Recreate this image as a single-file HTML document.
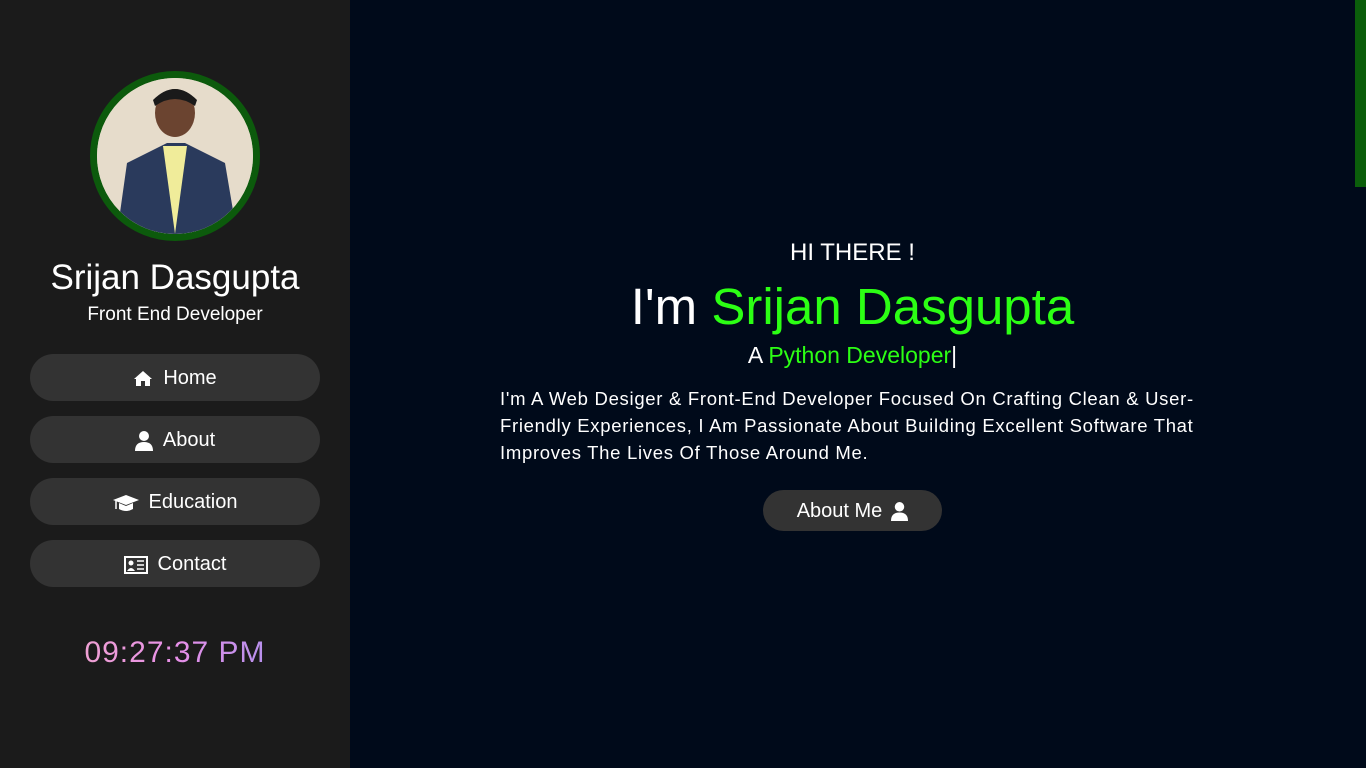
<!DOCTYPE html>
<html><head><meta charset="utf-8"><style>
*{margin:0;padding:0;box-sizing:border-box}
body{width:1366px;height:768px;overflow:hidden;background:#000a1a;font-family:"Liberation Sans",sans-serif;color:#fff;position:relative}
.side{position:absolute;left:0;top:0;width:350px;height:768px;background:#1b1b1b}
.avatar{position:absolute;left:90px;top:71px;width:170px;height:170px;border-radius:50%;border:7px solid #0c5a0c;overflow:hidden;background:linear-gradient(135deg,#e8e0d0,#d8cfc0)}
.name{position:absolute;top:258px;width:350px;text-align:center;font-size:35px}
.role{position:absolute;top:304px;width:350px;text-align:center;font-size:19px}
.btn{position:absolute;left:30px;width:290px;height:47px;border-radius:24px;background:#333;display:flex;align-items:center;justify-content:center;font-size:20px;gap:10px;padding-top:2px}
.clock{position:absolute;top:636px;width:350px;text-align:center;font-size:30px;letter-spacing:1px;background:linear-gradient(90deg,#f4b0c0,#e890e8,#8a90f0);-webkit-background-clip:text;color:transparent}
.main{position:absolute;left:350px;width:1005px;text-align:center}
.g{color:#2cff14}
.bar{position:absolute;right:0;top:0;width:11px;height:187px;background:#0b5e0b}
</style></head><body>
<div class="side">
<div class="avatar"><svg width="156" height="156" viewBox="0 0 156 156"><rect width="156" height="156" fill="#e6dccb"/><path d="M20 156 L30 85 L70 65 L88 65 L128 85 L140 156Z" fill="#2a3a5c"/><path d="M66 68 L78 156 L90 68Z" fill="#f0ec9a"/><ellipse cx="78" cy="35" rx="20" ry="24" fill="#6b4430"/><path d="M56 22 Q78 0 100 22 L98 28 Q78 14 58 28Z" fill="#1a1a1a"/></svg></div>
<div class="name">Srijan Dasgupta</div>
<div class="role">Front End Developer</div>
<div class="btn" style="top:354px"><svg width="20" height="17" viewBox="0 0 20 17"><path d="M10 1 L19 9 L17 9 L17 16 L12 16 L12 11 L8 11 L8 16 L3 16 L3 9 L1 9Z" fill="#fff"/></svg>Home</div>
<div class="btn" style="top:416px"><svg width="18" height="20" viewBox="0 0 18 20"><circle cx="9" cy="5" r="5" fill="#fff"/><path d="M0 20 Q0 11 9 11 Q18 11 18 20Z" fill="#fff"/></svg>About</div>
<div class="btn" style="top:478px"><svg width="26" height="20" viewBox="0 0 26 20"><path d="M13 2 L26 7 L13 12 L0 7Z" fill="#fff"/><path d="M6 10 L6 16 Q13 20 20 16 L20 10 L13 13Z" fill="#fff"/><path d="M3 8 L3 16" stroke="#fff" stroke-width="1.5"/></svg>Education</div>
<div class="btn" style="top:540px"><svg width="24" height="18" viewBox="0 0 24 18"><rect x="1" y="1" width="22" height="16" fill="none" stroke="#fff" stroke-width="2"/><circle cx="7" cy="7" r="2.5" fill="#fff"/><path d="M3 15 Q7 9 11 15Z" fill="#fff"/><path d="M13 5h7M13 9h7M13 13h7" stroke="#fff" stroke-width="1.5"/></svg>Contact</div>
<div class="clock">09:27:37 PM</div>
</div>
<div class="main" style="top:239px;font-size:24px">HI THERE !</div>
<div class="main" style="top:277px;font-size:51px">I'm <span class="g">Srijan Dasgupta</span></div>
<div class="main" style="top:342px;font-size:23px">A <span class="g">Python Developer</span>|</div>
<div style="position:absolute;left:500px;top:385px;width:712px;font-size:18.5px;line-height:27px;letter-spacing:0.7px">I'm A Web Desiger &amp; Front-End Developer Focused On Crafting Clean &amp; User-Friendly Experiences, I Am Passionate About Building Excellent Software That Improves The Lives Of Those Around Me.</div>
<div style="position:absolute;left:763px;top:490px;width:179px;height:41px;border-radius:21px;background:#333;display:flex;align-items:center;justify-content:center;gap:9px;font-size:20px;padding-top:2px">About Me <svg width="17" height="19" viewBox="0 0 18 20"><circle cx="9" cy="5" r="5" fill="#fff"/><path d="M0 20 Q0 11 9 11 Q18 11 18 20Z" fill="#fff"/></svg></div>
<div class="bar"></div>
</body></html>
